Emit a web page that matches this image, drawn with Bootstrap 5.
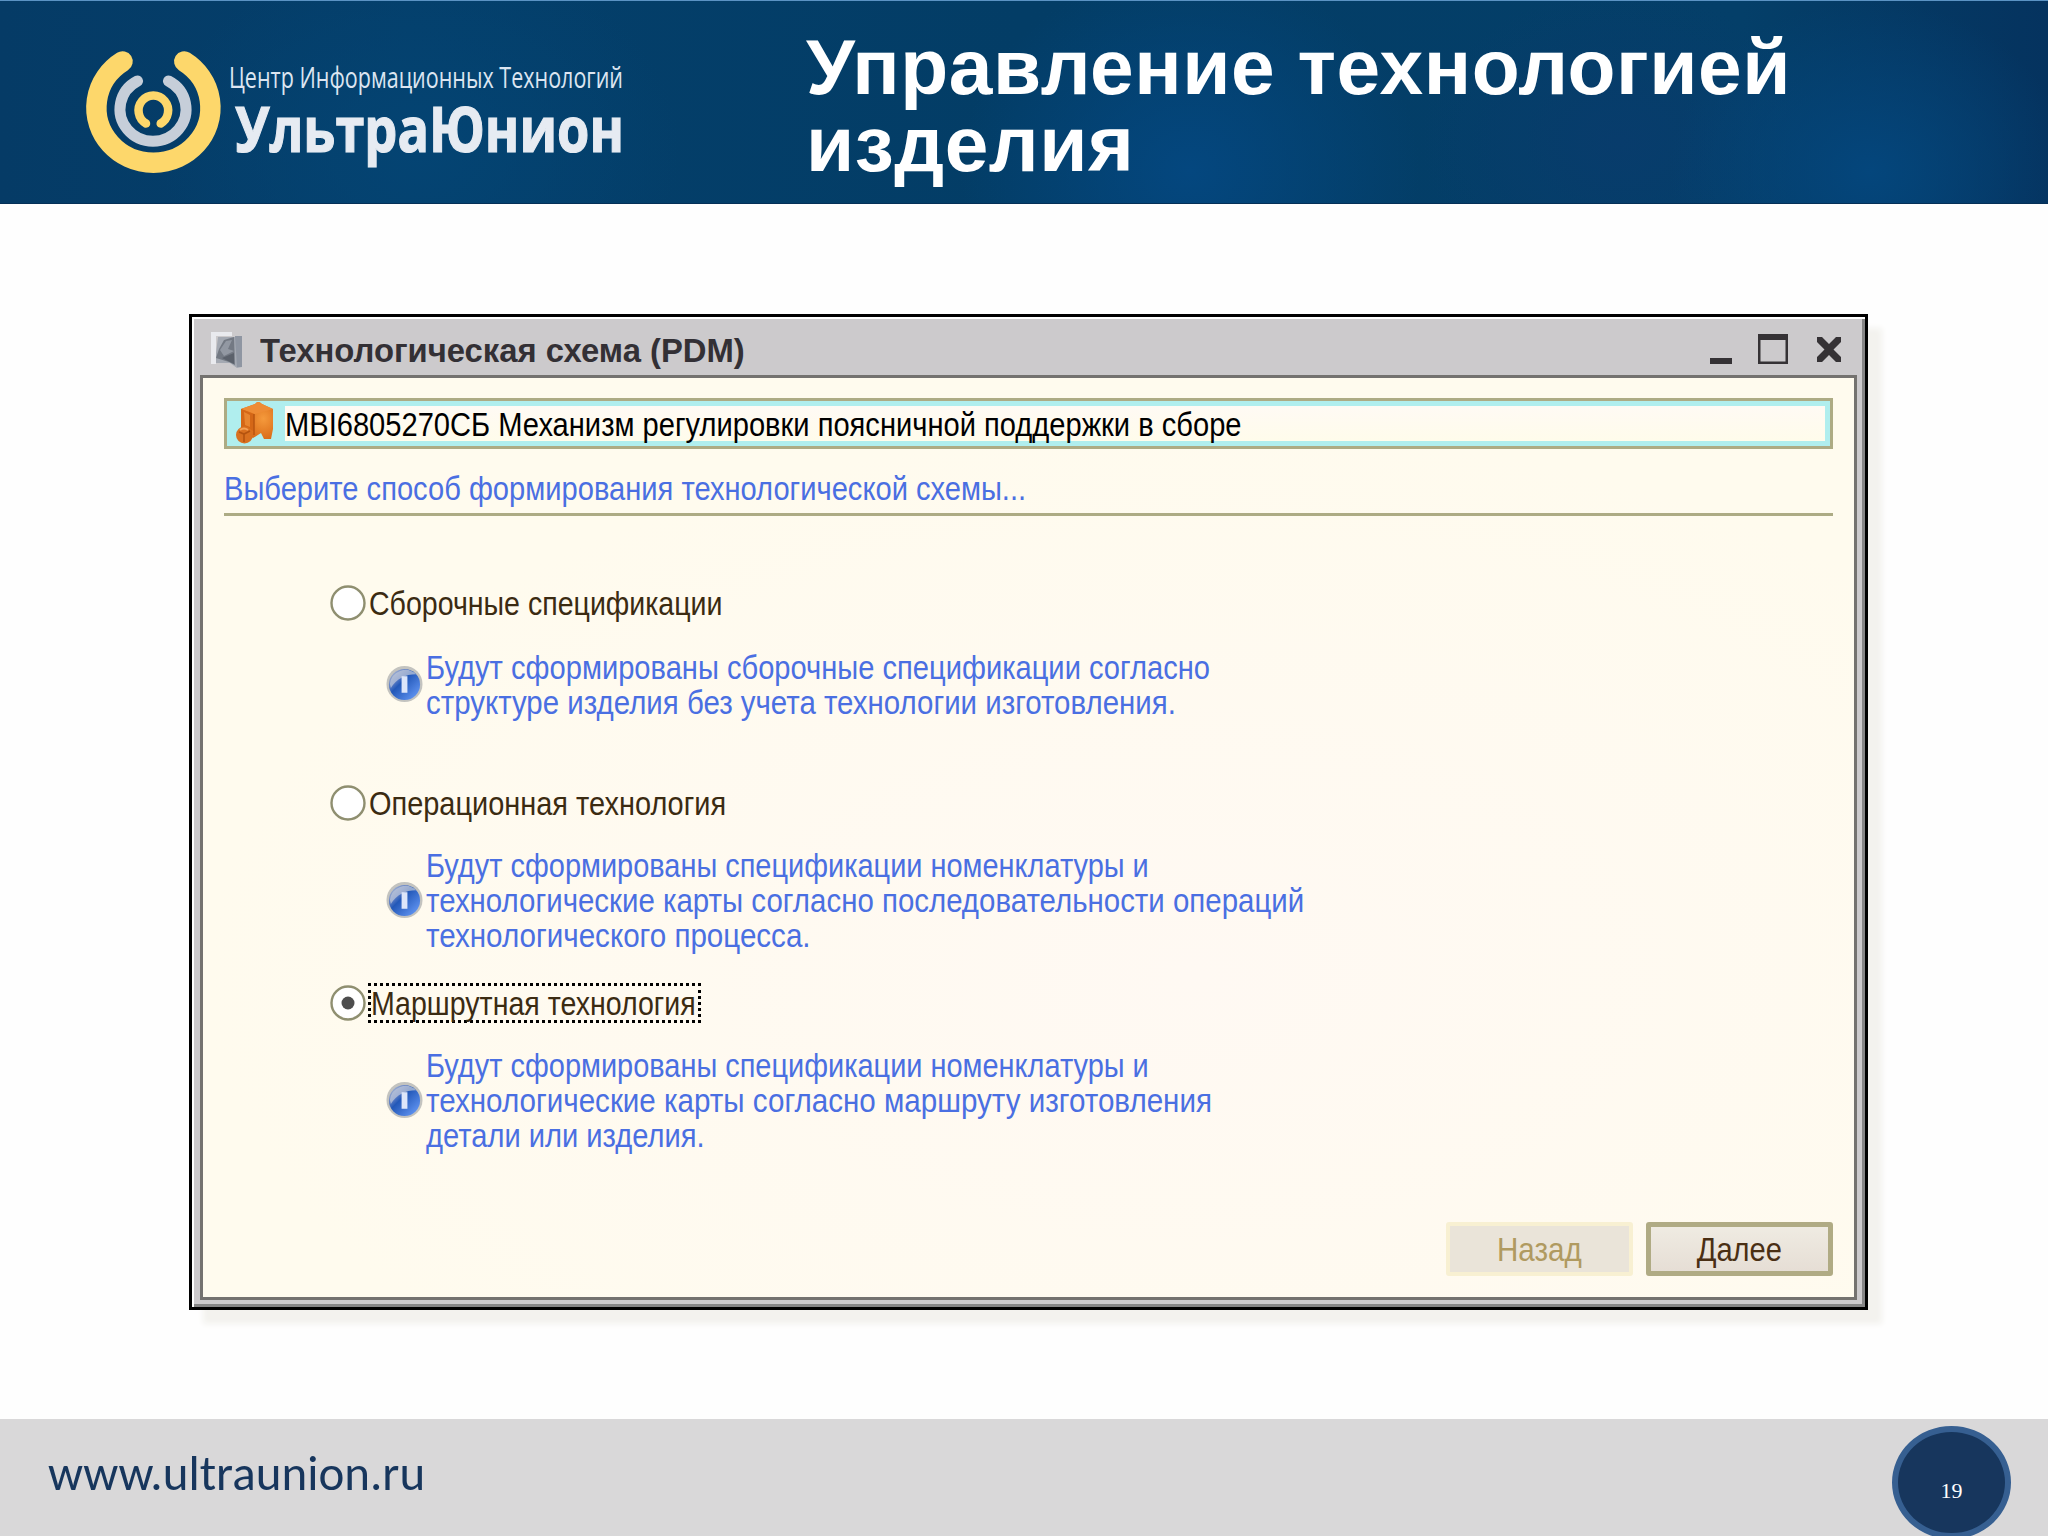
<!DOCTYPE html>
<html lang="ru">
<head>
<meta charset="utf-8">
<title>Управление технологией изделия</title>
<link href="https://cdn.jsdelivr.net/npm/bootstrap@5.3.0/dist/css/bootstrap.min.css" rel="stylesheet">
<style>
body{height:1536px;width:2048px;overflow:hidden;background:#fefefe;font-family:"Liberation Sans",Arial,sans-serif;font-size:33px;line-height:35px;color:#3b2b12}
.slide-head{height:204px;border-top:1px solid #5b93c4;border-bottom:1px solid #053057;
 background:radial-gradient(ellipse 230px 200px at 1190px 170px,#04477f 0,#04477f00 100%),radial-gradient(ellipse 200px 170px at 1870px 170px,#04467c 0,#04467c00 100%),radial-gradient(ellipse 260px 200px at 420px 150px,#044473 0,#04447300 100%),radial-gradient(ellipse 200px 150px at 1620px 140px,#083c6c 0,#083c6c00 100%),linear-gradient(90deg,#053b66 0,#043f6b 20%,#033d66 50%,#043f69 85%,#05335f 100%)}
.slide-title{font-size:78.5px;line-height:76.5px;letter-spacing:.52px;font-weight:700;color:#fff;padding:28px 0 0 806px;white-space:nowrap}
.brand{left:80px;top:40px;overflow:visible}
.stage{padding:110px 0 0 189px}
.win{width:1679px;height:996px;border:3px solid #000;background:#cccacc;box-shadow:inset 2px 2px 0 #fff,inset -3px -3px 0 #868686,14px 14px 6px #f3f2ee}
.win-bar{height:58px;padding:8px 23px 0 18px;color:#333035;font-weight:700}
.win-body{margin:0 8px 7px 8px;border:3px solid #74726f;padding:20px 21px 21px;background:radial-gradient(ellipse 60% 60% at 60% 65%,#fff9f3 0,#fffbee 100%)}
/* condensed dialog type: --k is the horizontal squeeze of a line */
.sq{display:inline-block;white-space:nowrap;transform-origin:0 50%;transform:translateY(1px) scaleX(var(--k,.882))}
.k86{--k:.865}.k87{--k:.877}.k89{--k:.892}.k90{--k:.896}.k99{--k:.994}
.win-bar .sq{transform:scaleX(var(--k))}
.fld{height:51px;border:3px solid #adab84;background:#b0eeee;padding:5px 5px 5px 8px;color:#000}
.fld-ico{margin-top:-5px}
.fld-text{background:linear-gradient(#fffaf4,#fffceb);line-height:35px;margin-left:8px}
.prompt{height:67px;padding-top:19px;line-height:40px;border-bottom:3px solid #adab84;color:#4a6fe2}
.opts{padding:67px 0 0 106px}
.opt{height:200px}
.opt-row{height:40px;line-height:40px}
.opt-label{height:40px;padding:0 3px 0 1px;margin-left:2px}
.opt-focus{width:333px;height:40px;line-height:34px;border:3px dotted #000;padding:0}
.opt-desc{color:#4a6fe2;margin:24px 0 0 56px;gap:3px}
.opt-desc.two{margin-top:26px}
.btn-1c{width:187px;height:54px;border:5px solid #b0ab84;border-radius:3px;background:linear-gradient(#efebe2,#e6ded5);color:#4a2f14;font-size:33px;line-height:40px;padding:0}
.btn-1c .sq{transform-origin:50% 50%}
.btn-1c:disabled{border:4px solid #f8f0d2;background:#eae4d9;color:#b09a60;opacity:1}
.btn-pair{gap:13px}
.slide-foot{height:117px;background:#d9d8d9}
.site{font-family:Carlito,Lato,sans-serif;font-size:49px;line-height:60px;color:#17365d;padding:24px 0 0 48px}
.pg{width:119px;height:113px;border:6px solid #365f91;border-radius:50%;background:#17365d;color:#fff;font:22px/30px "Liberation Serif",serif;margin:7px 37px 0 0;padding-top:44px}
</style>
<script src="https://cdn.jsdelivr.net/npm/bootstrap@5.3.0/dist/js/bootstrap.bundle.min.js"></script>
</head>
<body class="d-flex flex-column">
<svg width="0" height="0" class="position-absolute"><defs>
<linearGradient id="gb" x1="0" y1="0" x2="1" y2="1"><stop offset="0" stop-color="#cfd3da"/><stop offset=".3" stop-color="#5b7cc4"/><stop offset=".42" stop-color="#2358b8"/><stop offset="1" stop-color="#6fa2ff"/></linearGradient>
<symbol id="info" viewBox="0 0 38 38"><circle cx="19" cy="19" r="18.5" fill="#c3c3bf"/><circle cx="19" cy="19.500" r="16" fill="url(#gb)"/><path d="M4 19A16 16 0 0 1 31 9Q14 9 5 23Z" fill="#bcc5d8" opacity=".75"/><path d="M16 11h6v17h-6z" fill="#dde6fa"/></symbol>
<symbol id="radio" viewBox="0 0 36 36"><circle cx="18" cy="18" r="16.5" fill="#fff" stroke="#8f8f70" stroke-width="2.4"/></symbol>
<radialGradient id="or" cx=".7" cy=".45" r=".6"><stop offset="0" stop-color="#f59a3c"/><stop offset="1" stop-color="#d96a17"/></radialGradient>
</defs></svg>
<header class="slide-head position-relative flex-shrink-0">
<svg class="brand position-absolute" width="560" height="150" viewBox="80 41 560 150" fill="none" stroke-linecap="round">
<path d="M122.500 61.500A57 55 0 1 0 184.300 61.500" stroke="#fdd76b" stroke-width="20.5"/>
<path d="M137.500 81A33 32 0 1 0 168.500 81" stroke="#c6ced9" stroke-width="11"/>
<path d="M146 123.500A14.800 15 0 1 1 160.700 123.500" stroke="#fdd76b" stroke-width="8.5"/>
<text x="229" y="88" font-family="Open Sans" font-size="29.5" fill="#dce5f1" textLength="394" lengthAdjust="spacingAndGlyphs">Центр Информационных Технологий</text>
<text x="235" y="152" font-family="Open Sans" font-weight="700" font-size="62" fill="#e6ebf2" stroke="#e6ebf2" stroke-width="1.2" textLength="389" lengthAdjust="spacingAndGlyphs">УльтраЮнион</text>
</svg>
<h1 class="slide-title m-0">Управление технологией<br>изделия</h1>
</header>
<main class="stage flex-fill">
<section class="win d-flex flex-column">
<div class="win-bar d-flex align-items-center flex-shrink-0">
<svg width="34" height="38" viewBox="0 0 34 38"><path d="M1 1H22V5H6V33H1Z" fill="#e9eaee"/><path d="M8 6H32V36L27 37L20 32H6V22Z" fill="#a4a9b2"/><path d="M25 5H32V36H27Z" fill="#8f96a2"/><path d="M14 9L24 6L25 34L19 31L6 27L9 18Z" fill="#737983"/><path d="M10 19L16 10L22 9L18 18L24 20L14 25Z" fill="#9298a2"/><path d="M12 27L24 22V33Z" fill="#5b616b"/></svg>
<span class="sq k99 ms-3">Технологическая схема (PDM)</span>
<svg class="ms-auto" width="132" height="32" viewBox="0 0 132 32" fill="#353235"><path d="M0 24h22v6H0z"/><path d="M48 0H78V30H48ZM50.500 6V27.500H75.500V6Z" fill-rule="evenodd"/><path d="M107 3h5l7 7 7-7h5v5l-7.500 7.500L131 23v5h-5l-7-7-7 7h-5v-5l7.500-7.500L107 8z"/></svg>
</div>
<div class="win-body flex-fill d-flex flex-column">
<div class="fld d-flex flex-shrink-0">
<svg class="fld-ico flex-shrink-0" width="42" height="44" viewBox="0 0 42 44"><path d="M6 8L20 3Q23 -1 27 3L38 8V28L36 38H29L26 32L18 37L6 28Z" fill="url(#or)"/><path d="M6 8L20 3Q23 -1 27 3L38 8L20 13Z" fill="#ee8c35"/><path d="M6 8L19 13V30L6 27Z" fill="#d46717"/><path d="M9 11L15 14V26L10 24Z" fill="#e8852f"/><path d="M19 13V34" stroke="#b95510" stroke-width="1.500"/><circle cx="9.500" cy="34" r="8.500" fill="#d9701f"/><path d="M4 31L9 33L15 30M9 33V41" stroke="#b4530f" stroke-width="1.600" fill="none"/><path d="M5 29Q9 26 13 29" stroke="#f3a055" stroke-width="2" fill="none"/></svg>
<div class="fld-text flex-fill"><span class="sq">MBI6805270СБ Механизм регулировки поясничной поддержки в сборе</span></div>
</div>
<div class="prompt flex-shrink-0"><span class="sq">Выберите способ формирования технологической схемы...</span></div>
<div class="opts">
<div class="opt"><div class="opt-row d-flex align-items-center"><svg width="36" height="36"><use href="#radio"/></svg><span class="opt-label"><span class="sq k86">Сборочные спецификации</span></span></div>
<div class="opt-desc two d-flex align-items-center"><svg width="37" height="38"><use href="#info"/></svg><div><span class="sq">Будут сформированы сборочные спецификации согласно</span><br><span class="sq k89">структуре изделия без учета технологии изготовления.</span></div></div></div>
<div class="opt"><div class="opt-row d-flex align-items-center"><svg width="36" height="36"><use href="#radio"/></svg><span class="opt-label"><span class="sq k87">Операционная технология</span></span></div>
<div class="opt-desc d-flex align-items-center"><svg width="37" height="38"><use href="#info"/></svg><div><span class="sq k87">Будут сформированы спецификации номенклатуры и</span><br><span class="sq k89">технологические карты согласно последовательности операций</span><br><span class="sq k90">технологического процесса.</span></div></div></div>
<div class="opt"><div class="opt-row d-flex align-items-center"><svg width="36" height="36"><use href="#radio"/><circle cx="18" cy="18" r="6.500" fill="#4d4d4d"/></svg><span class="opt-label opt-focus"><span class="sq k86">Маршрутная технология</span></span></div>
<div class="opt-desc d-flex align-items-center"><svg width="37" height="38"><use href="#info"/></svg><div><span class="sq k87">Будут сформированы спецификации номенклатуры и</span><br><span class="sq k90">технологические карты согласно маршруту изготовления</span><br><span class="sq">детали или изделия.</span></div></div></div>
</div>
<div class="btn-pair mt-auto d-flex justify-content-end"><button class="btn btn-1c" disabled><span class="sq k90">Назад</span></button><button class="btn btn-1c"><span class="sq">Далее</span></button></div>
</div>
</section>
</main>
<footer class="slide-foot d-flex justify-content-between flex-shrink-0">
<div class="site">www.ultraunion.ru</div>
<div class="pg text-center flex-shrink-0">19</div>
</footer>
</body>
</html>
